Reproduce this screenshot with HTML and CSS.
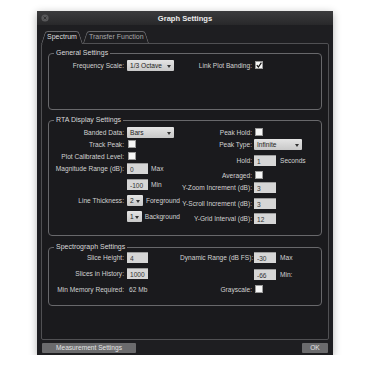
FILE: index.html
```html
<!DOCTYPE html>
<html lang="en">
<head>
    <meta charset="UTF-8">
    <meta name="viewport" content="width=device-width, initial-scale=1.0">
    <title>Graph Settings</title>
    <link rel="stylesheet" href="styles.css">
</head>
<body>
    <div class="window">
        <div class="titlebar">
            <span class="close">
                <svg width="8" height="8" viewBox="0 0 8 8">
                    <circle cx="4" cy="4" r="3.6" fill="#58585a"/>
                    <path d="M2.6 2.6 L5.4 5.4 M5.4 2.6 L2.6 5.4" stroke="#2c2c2e" stroke-width="0.9"/>
                </svg>
            </span>
            <span class="title">Graph Settings</span>
            <span></span>
        </div>

        <div class="tabs">
            <div class="tab active">Spectrum</div>
            <div class="tab">Transfer Function</div>
        </div>

        <div class="panel">
            <fieldset class="group gs">
                <legend>General Settings</legend>
                <div class="cols">
                    <div class="col-left">
                        <div class="row">
                            <span class="label">Frequency Scale:</span>
                            <span class="select"><span>1/3 Octave</span><svg width="4" height="3" viewBox="0 0 4 3"><path d="M0 0 H4 L2 3 Z" fill="#333"/></svg></span>
                        </div>
                    </div>
                    <div class="col-right">
                        <div class="row">
                            <span class="label">Link Plot Banding:</span>
                            <span class="check">
                                <svg width="6" height="6" viewBox="0 0 6 6"><path d="M0.8 3.2 L2.4 5 L5.4 0.6" fill="none" stroke="#111" stroke-width="1.2"/></svg>
                            </span>
                        </div>
                    </div>
                </div>
            </fieldset>

            <fieldset class="group rta">
                <legend>RTA Display Settings</legend>
                <div class="cols">
                    <div class="col-left">
                        <div class="row">
                            <span class="label">Banded Data:</span>
                            <span class="select"><span>Bars</span><svg width="4" height="3" viewBox="0 0 4 3"><path d="M0 0 H4 L2 3 Z" fill="#333"/></svg></span>
                        </div>
                        <div class="row">
                            <span class="label">Track Peak:</span>
                            <span class="check"></span>
                        </div>
                        <div class="row">
                            <span class="label">Plot Calibrated Level:</span>
                            <span class="check"></span>
                        </div>
                        <div class="row">
                            <span class="label">Magnitude Range (dB):</span>
                            <input class="field" type="text" value="0">
                            <span class="unit">Max</span>
                        </div>
                        <div class="row mt4">
                            <span class="label"></span>
                            <input class="field" type="text" value="-100">
                            <span class="unit">Min</span>
                        </div>
                        <div class="row mt4">
                            <span class="label">Line Thickness:</span>
                            <span class="select narrow"><span>2</span><svg width="4" height="3" viewBox="0 0 4 3"><path d="M0 0 H4 L2 3 Z" fill="#333"/></svg></span>
                            <span class="unit">Foreground</span>
                        </div>
                        <div class="row mt4">
                            <span class="label"></span>
                            <span class="select narrow"><span>1</span><svg width="4" height="3" viewBox="0 0 4 3"><path d="M0 0 H4 L2 3 Z" fill="#333"/></svg></span>
                            <span class="unit">Background</span>
                        </div>
                    </div>
                    <div class="col-right">
                        <div class="row">
                            <span class="label">Peak Hold:</span>
                            <span class="check"></span>
                        </div>
                        <div class="row">
                            <span class="label">Peak Type:</span>
                            <span class="select wide"><span>Infinite</span><svg width="4" height="3" viewBox="0 0 4 3"><path d="M0 0 H4 L2 3 Z" fill="#333"/></svg></span>
                        </div>
                        <div class="row mt4">
                            <span class="label">Hold:</span>
                            <input class="field" type="text" value="1">
                            <span class="unit">Seconds</span>
                        </div>
                        <div class="row mt3">
                            <span class="label">Averaged:</span>
                            <span class="check"></span>
                        </div>
                        <div class="row">
                            <span class="label">Y-Zoom Increment (dB):</span>
                            <input class="field" type="text" value="3">
                        </div>
                        <div class="row mt4">
                            <span class="label">Y-Scroll Increment (dB):</span>
                            <input class="field" type="text" value="3">
                        </div>
                        <div class="row mt3">
                            <span class="label">Y-Grid Interval (dB):</span>
                            <input class="field" type="text" value="12">
                        </div>
                    </div>
                </div>
            </fieldset>

            <fieldset class="group sg">
                <legend>Spectrograph Settings</legend>
                <div class="cols">
                    <div class="col-left">
                        <div class="row">
                            <span class="label">Slice Height:</span>
                            <input class="field" type="text" value="4">
                        </div>
                        <div class="row mt4">
                            <span class="label">Slices in History:</span>
                            <input class="field" type="text" value="1000">
                        </div>
                        <div class="row mt4">
                            <span class="label">Min Memory Required:</span>
                            <span class="value">62 Mb</span>
                        </div>
                    </div>
                    <div class="col-right">
                        <div class="row">
                            <span class="label">Dynamic Range (dB FS):</span>
                            <input class="field" type="text" value="-30">
                            <span class="unit">Max</span>
                        </div>
                        <div class="row mt5">
                            <span class="label"></span>
                            <input class="field" type="text" value="-66">
                            <span class="unit">Min:</span>
                        </div>
                        <div class="row mt3">
                            <span class="label">Grayscale:</span>
                            <span class="check"></span>
                        </div>
                    </div>
                </div>
            </fieldset>
        </div>

        <div class="footer">
            <button class="btn btn-wide">Measurement Settings</button>
            <button class="btn btn-ok">OK</button>
        </div>
    </div>
</body>
</html>
```

FILE: styles.css
```css
body {
    margin: 0;
    background: #ffffff;
    font-family: "Liberation Sans", Arial, sans-serif;
    font-size: 6.6px;
    color: #d2d2d2;
}

.window {
    width: 296px;
    height: 344px;
    margin: 11px 0 0 37px;
    background: #1e1e21;
    box-shadow: 0 2px 8px rgba(0, 0, 0, 0.3);
    display: flex;
    flex-direction: column;
}

.titlebar {
    height: 14px;
    display: grid;
    grid-template-columns: 1fr auto 1fr;
    align-items: center;
    padding: 0 4px;
    background: linear-gradient(#3b3b3d, #28282a);
}

.close {
    display: flex;
}

.title {
    font-weight: bold;
    font-size: 7.6px;
    color: #ececec;
}

.tabs {
    display: flex;
    align-items: flex-start;
    height: 19px;
    box-sizing: border-box;
    padding: 6px 0 0 4px;
    margin-bottom: -1px;
    position: relative;
    z-index: 1;
}

.tab {
    position: relative;
    z-index: 0;
    height: 12px;
    line-height: 12px;
    padding: 0 6px;
    font-size: 7px;
    color: #a6a6a8;
}

.tab::before,
.tab::after {
    content: "";
    position: absolute;
    top: 0;
    bottom: 0;
    width: 50%;
    border-top: 1px solid #68686b;
    background: #1e1e21;
    transform-origin: bottom;
    z-index: -1;
}

.tab::before {
    left: 0;
    border-left: 1px solid #68686b;
    border-top-left-radius: 3px;
    transform: skewX(-18deg);
}

.tab::after {
    right: 0;
    border-right: 1px solid #68686b;
    border-top-right-radius: 3px;
    transform: skewX(18deg);
}

.tab.active {
    height: 13px;
    color: #dedede;
}

.tab.active::before,
.tab.active::after {
    background: #1a1a1d;
}

.panel {
    margin: 0 4px;
    height: 297px;
    box-sizing: border-box;
    border: 1px solid #505053;
    border-radius: 2px;
    background: #1a1a1d;
    padding: 5px 6px 0;
}

.group {
    margin: 0;
    min-width: 0;
    border: 1px solid #68686b;
    border-radius: 4px;
}

.group legend {
    margin-left: 5px;
    padding: 0 2px;
    line-height: 8px;
    font-size: 7px;
    color: #d8d8d8;
}

.gs {
    padding: 2px 0 38px;
}

.rta {
    margin-top: 6px;
    padding: 2px 0 11px;
}

.sg {
    margin-top: 7px;
    padding: 0 0 10px;
}

.cols {
    display: flex;
}

.col-left {
    width: 131px;
    flex-shrink: 0;
}

.col-right {
    flex: 1;
}

.row {
    display: flex;
    align-items: center;
    height: 12px;
    white-space: nowrap;
}

.mt3 {
    margin-top: 3px;
}

.mt4 {
    margin-top: 4px;
}

.mt5 {
    margin-top: 5px;
}

.label {
    flex-shrink: 0;
    width: 75px;
    margin-right: 3px;
    text-align: right;
}

.col-right .label {
    width: 72px;
    margin-right: 2px;
}

.select {
    width: 47px;
    height: 11px;
    box-sizing: border-box;
    display: flex;
    align-items: center;
    justify-content: space-between;
    padding: 1px 3px 0;
    background: linear-gradient(#e4e4e4, #c8c8c8);
    border-radius: 1px;
    color: #222;
}

.select svg {
    margin-top: 2px;
}

.select.narrow {
    width: 20px;
}

.select.wide {
    width: 48px;
}

.field {
    width: 21px;
    height: 11px;
    box-sizing: border-box;
    margin: 0;
    padding: 1px 0 0 3px;
    border: none;
    border-top: 1px solid #9c9c9c;
    background: #d6d6d6;
    color: #333;
    font: inherit;
    outline: none;
}

.col-right .field {
    width: 22px;
}

.check {
    width: 8px;
    height: 8px;
    box-sizing: border-box;
    margin-left: 1px;
    display: flex;
    align-items: center;
    justify-content: center;
    background: #f6f6f6;
    border: 1px solid #9a9a9a;
}

.unit {
    margin-left: 3px;
}

.col-right .unit {
    margin-left: 4px;
}

.value {
    padding-left: 2px;
}

.footer {
    display: flex;
    justify-content: space-between;
    padding: 3px 5px 0;
}

.btn {
    height: 10px;
    padding: 0;
    border: none;
    border-radius: 1px;
    background: #6b6b6d;
    color: #e4e4e4;
    font: inherit;
    line-height: 10px;
}

.btn-wide {
    width: 94px;
}

.btn-ok {
    width: 26px;
}
```
